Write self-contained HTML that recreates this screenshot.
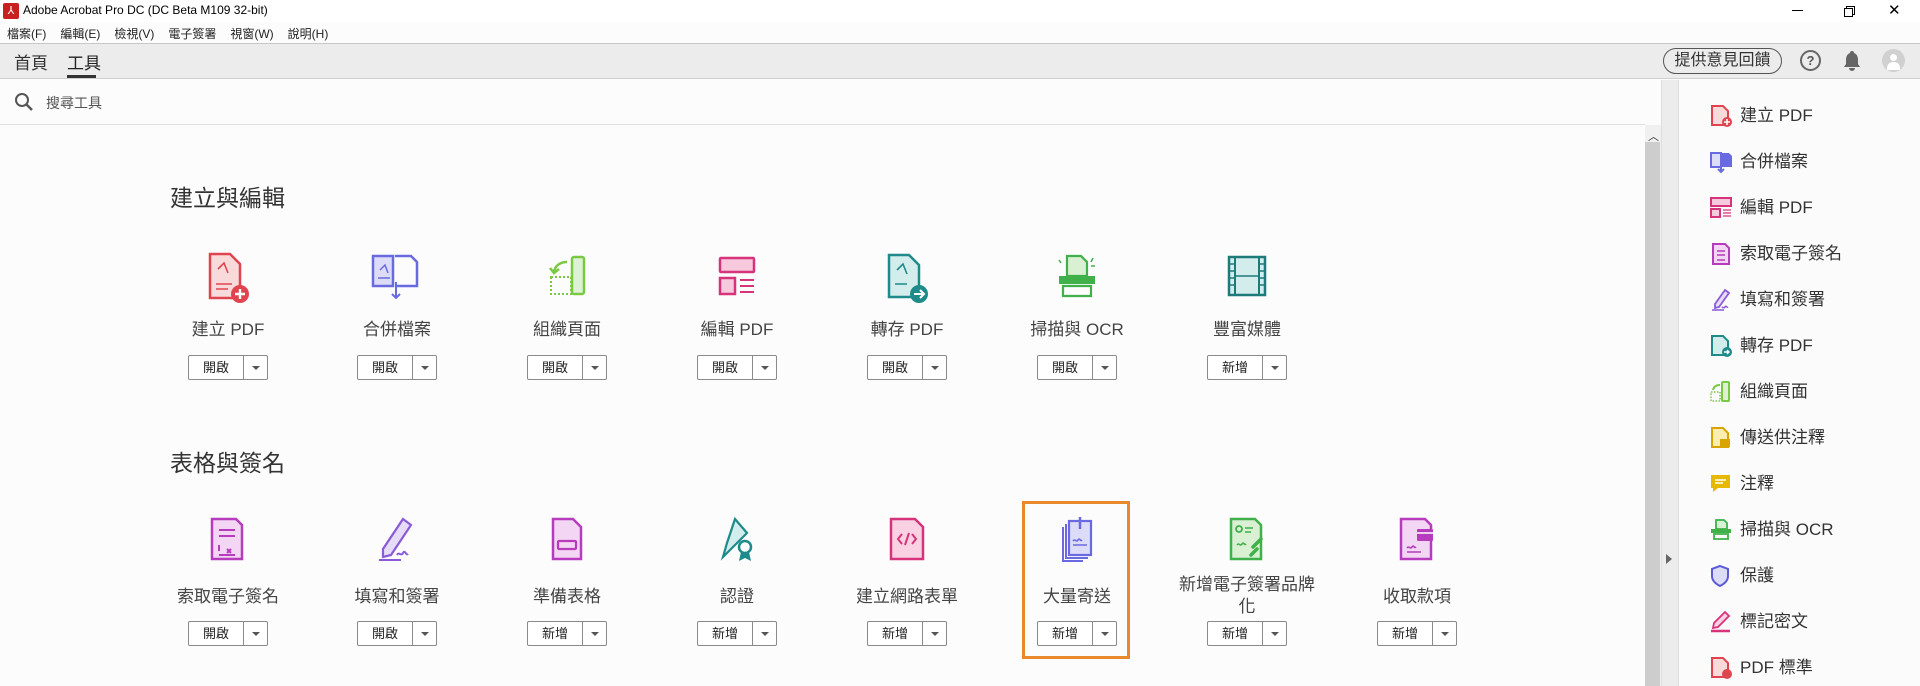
<!DOCTYPE html>
<html><head><meta charset="utf-8"><style>
*{margin:0;padding:0;box-sizing:border-box}
body{width:1920px;height:686px;overflow:hidden;background:#fcfcfc;font-family:"Liberation Sans","Noto Sans CJK TC",sans-serif;color:#333;position:relative}
.a{position:absolute}
.menu span{margin-right:14px}
.cell{position:absolute;width:170px;text-align:center}
.lbl{font-size:17px;color:#444;line-height:22px}
.r1 .lbl{margin-top:8px!important}
.r2 .lbl{margin-top:12px!important}
.btn{position:absolute;width:80px;height:25px;border:1px solid #8a8a8a;border-radius:2px;background:#fff;font-size:13px;color:#222;left:45px}
.btn .l{position:absolute;left:0;top:0;width:55px;height:23px;line-height:23px;text-align:center;border-right:1px solid #8a8a8a}
.btn .r{position:absolute;left:63px;top:10px;width:0;height:0;border-left:4px solid transparent;border-right:4px solid transparent;border-top:4px solid #555}
.sb{position:absolute;left:1708px;font-size:17px;color:#333;height:30px;line-height:30px}
.sb svg{position:absolute;left:0;top:3px}
.sb span{position:absolute;left:32px;white-space:nowrap}
</style></head><body>
<div class="a" style="left:0;top:0;width:1920px;height:22px;background:#fff"></div>
<div class="a" style="left:3px;top:3px;width:16px;height:16px;background:#c8201e;border-radius:2px;color:#fff;font-size:11px;text-align:center;line-height:16px">⅄</div>
<div class="a" style="left:23px;top:3px;font-size:12px;color:#000">Adobe Acrobat Pro DC (DC Beta M109 32-bit)</div>
<div class="a" style="left:1792px;top:10px;width:11px;height:1px;background:#000"></div>
<div class="a" style="left:1846px;top:6px;width:9px;height:9px;border:1px solid #000"></div>
<div class="a" style="left:1844px;top:8px;width:9px;height:9px;border:1px solid #000;background:#fff"></div>
<div class="a" style="left:1888px;top:1px;font-size:15px;color:#000">✕</div>
<div class="a menu" style="left:7px;top:25px;font-size:12px;color:#222"><span>檔案(F)</span><span>編輯(E)</span><span>檢視(V)</span><span>電子簽署</span><span>視窗(W)</span><span>說明(H)</span></div>
<div class="a" style="left:0;top:43px;width:1920px;height:1px;background:#c8c8c8"></div>
<div class="a" style="left:0;top:44px;width:1920px;height:35px;background:#ececec;border-bottom:1px solid #cfcfcf"></div>
<div class="a" style="left:14px;top:49px;font-size:17px;color:#333">首頁</div>
<div class="a" style="left:67px;top:49px;font-size:17px;color:#222">工具</div>
<div class="a" style="left:67px;top:75px;width:29px;height:3px;background:#333"></div>
<div class="a" style="left:1663px;top:48px;width:119px;height:26px;border:1.5px solid #555;border-radius:13px;font-size:16px;text-align:center;line-height:23px;color:#333">提供意見回饋</div>
<div class="a" style="left:1800px;top:50px;width:21px;height:21px;border:2px solid #666;border-radius:50%;font-size:13px;font-weight:bold;text-align:center;line-height:17px;color:#555">?</div>
<svg class="a" style="left:1843px;top:50px" width="18" height="21"><path d="M9 1a2 2 0 0 1 2 2c3 1 4 4 4 7v4l2 3H1l2-3v-4c0-3 1-6 4-7a2 2 0 0 1 2-2zM6 18h6a3 3 0 0 1-6 0z" fill="#666"/></svg>
<div class="a" style="left:1882px;top:49px;width:23px;height:23px;border-radius:50%;background:#d0d0d0;overflow:hidden"><div style="position:absolute;left:8px;top:5px;width:7px;height:7px;border-radius:50%;background:#fff"></div><div style="position:absolute;left:5px;top:13px;width:13px;height:8px;border-radius:6px 6px 0 0;background:#fff"></div></div>
<svg class="a" style="left:14px;top:92px" width="20" height="20"><circle cx="8" cy="8" r="6" stroke="#555" stroke-width="2" fill="none"/><line x1="12.5" y1="12.5" x2="18" y2="18" stroke="#555" stroke-width="2.4"/></svg>
<div class="a" style="left:46px;top:93px;font-size:14px;color:#555">搜尋工具</div>
<div class="a" style="left:0;top:124px;width:1645px;height:1px;background:#e0e0e0"></div>
<div class="a" style="left:1645px;top:125px;width:16px;height:561px;background:#f0f0f0"></div>
<div class="a" style="left:1645px;top:142px;width:15px;height:544px;background:#cdcdcd"></div>
<div class="a" style="left:1648px;top:128px;font-size:11px;color:#333">︿</div>
<div class="a" style="left:1661px;top:80px;width:18px;height:606px;background:#ececec;border-left:1px solid #ddd;border-right:1px solid #ddd"></div>
<div class="a" style="left:1666px;top:554px;width:0;height:0;border-top:5px solid transparent;border-bottom:5px solid transparent;border-left:6px solid #666"></div>
<div class="a" style="left:1679px;top:80px;width:241px;height:606px;background:#fbfbfb"></div>

<div class="a" style="left:170px;top:179px;font-size:23px;color:#333">建立與編輯</div>
<div class="a" style="left:170px;top:444px;font-size:23px;color:#333">表格與簽名</div>

<div class="r1">
<div class="cell" style="left:143px;top:252px">
<svg width="60" height="54" viewBox="0 0 60 54"><path d="M12 2h20l10 10v34H12z" fill="#f8dada" stroke="#e0454f" stroke-width="2.5"/><path d="M20 17l6-6 4 10M18 32h16M18 37h12" stroke="#e0454f" stroke-width="1.6" fill="none"/><circle cx="42" cy="42" r="9" fill="#e0454f"/><path d="M42 37v10M37 42h10" stroke="#fff" stroke-width="2.4"/></svg>
<div class="lbl">建立 PDF</div><div class="btn" style="top:103px"><div class="l">開啟</div><div class="r"></div></div></div>
<div class="cell" style="left:312px;top:252px">
<svg width="60" height="54" viewBox="0 0 60 54"><path d="M6 4h20v30H6z" fill="#dcdcf8" stroke="#6a6ae0" stroke-width="2.5"/><path d="M28 4h16l6 6v24H28" fill="none" stroke="#6a6ae0" stroke-width="2.5"/><path d="M13 18l5-5 3 8M11 26h12" stroke="#6a6ae0" stroke-width="1.5" fill="none"/><path d="M29 30v16M25 42l4 4 4-4" stroke="#6a6ae0" stroke-width="2" fill="none"/></svg>
<div class="lbl">合併檔案</div><div class="btn" style="top:103px"><div class="l">開啟</div><div class="r"></div></div></div>
<div class="cell" style="left:482px;top:252px">
<svg width="60" height="54" viewBox="0 0 60 54"><rect x="35" y="5" width="12" height="37" rx="2" fill="#ddf2d4" stroke="#7ac943" stroke-width="2.5"/><rect x="14" y="25" width="20" height="17" fill="none" stroke="#7ac943" stroke-width="2" stroke-dasharray="2 2"/><path d="M30 10c-6 0-12 3-13 10M13 16l4 5 5-4" stroke="#7ac943" stroke-width="2.5" fill="none"/></svg>
<div class="lbl">組織頁面</div><div class="btn" style="top:103px"><div class="l">開啟</div><div class="r"></div></div></div>
<div class="cell" style="left:652px;top:252px">
<svg width="60" height="54" viewBox="0 0 60 54"><rect x="13" y="6" width="34" height="14" rx="1" fill="#f6c9dd" stroke="#d6337a" stroke-width="2.5"/><rect x="13" y="26" width="15" height="16" fill="#f6c9dd" stroke="#d6337a" stroke-width="2.5"/><path d="M33 28h14M33 34h14M33 40h14" stroke="#d6337a" stroke-width="2"/></svg>
<div class="lbl">編輯 PDF</div><div class="btn" style="top:103px"><div class="l">開啟</div><div class="r"></div></div></div>
<div class="cell" style="left:822px;top:252px">
<svg width="60" height="54" viewBox="0 0 60 54"><path d="M12 3h20l10 10v32H12z" fill="#d3ecec" stroke="#1f8a8a" stroke-width="2.5"/><path d="M20 18l6-6 4 10M18 32h12" stroke="#1f8a8a" stroke-width="1.6" fill="none"/><circle cx="42" cy="42" r="9" fill="#1f8a8a"/><path d="M37 42h9M43 38l4 4-4 4" stroke="#fff" stroke-width="2" fill="none"/></svg>
<div class="lbl">轉存 PDF</div><div class="btn" style="top:103px"><div class="l">開啟</div><div class="r"></div></div></div>
<div class="cell" style="left:992px;top:252px">
<svg width="60" height="54" viewBox="0 0 60 54"><path d="M20 4h14l6 6v14H20z" fill="#d9f0d2" stroke="#3fb04a" stroke-width="2.2"/><rect x="12" y="24" width="36" height="8" fill="#3fb04a"/><path d="M16 34h28v10H16z" fill="none" stroke="#3fb04a" stroke-width="2.2"/><path d="M12 8l2 3M46 6l-2 4M48 14h-4" stroke="#3fb04a" stroke-width="1.5"/></svg>
<div class="lbl">掃描與 OCR</div><div class="btn" style="top:103px"><div class="l">開啟</div><div class="r"></div></div></div>
<div class="cell" style="left:1162px;top:252px">
<svg width="60" height="54" viewBox="0 0 60 54"><rect x="12" y="5" width="36" height="38" fill="#d3ecec" stroke="#1f7a7a" stroke-width="2.5"/><path d="M18 5v38M42 5v38" stroke="#1f7a7a" stroke-width="2"/><path d="M12 12h6M12 19h6M12 26h6M12 33h6M42 12h6M42 19h6M42 26h6M42 33h6M18 24h24" stroke="#1f7a7a" stroke-width="1.5"/></svg>
<div class="lbl">豐富媒體</div><div class="btn" style="top:103px"><div class="l">新增</div><div class="r"></div></div></div>
</div>

<div class="r2">
<div class="cell" style="left:143px;top:515px">
<svg width="60" height="54" viewBox="0 0 60 54"><path d="M14 4h24l6 6v34H14z" fill="#f3d6f3" stroke="#b63bbd" stroke-width="2.5"/><path d="M21 15h16M21 21h16M21 30v6M29 34l4 4M33 34l-4 4M21 40h16" stroke="#b63bbd" stroke-width="2"/></svg>
<div class="lbl">索取電子簽名</div><div class="btn" style="top:106px"><div class="l">開啟</div><div class="r"></div></div></div>
<div class="cell" style="left:312px;top:515px">
<svg width="60" height="54" viewBox="0 0 60 54"><path d="M36 4l8 6-20 30-8 2v-8z" fill="#e7dcf7" stroke="#8a5bd6" stroke-width="2.2"/><path d="M12 45h22M30 40c2-4 4 2 6-2s3 3 5 1" stroke="#8a5bd6" stroke-width="2" fill="none"/></svg>
<div class="lbl">填寫和簽署</div><div class="btn" style="top:106px"><div class="l">開啟</div><div class="r"></div></div></div>
<div class="cell" style="left:482px;top:515px">
<svg width="60" height="54" viewBox="0 0 60 54"><path d="M16 4h20l8 8v32H16z" fill="#f3d6f3" stroke="#b63bbd" stroke-width="2.5"/><rect x="21" y="26" width="18" height="8" rx="1" fill="none" stroke="#b63bbd" stroke-width="2.2"/></svg>
<div class="lbl">準備表格</div><div class="btn" style="top:106px"><div class="l">新增</div><div class="r"></div></div></div>
<div class="cell" style="left:652px;top:515px">
<svg width="60" height="54" viewBox="0 0 60 54"><path d="M28 4l12 14-14 14-10 10 4-14z" fill="#d3ecec" stroke="#1f8a8a" stroke-width="2.2"/><circle cx="38" cy="32" r="6" fill="none" stroke="#1f8a8a" stroke-width="2.5"/><path d="M34 37l-2 9 6-3 6 3-2-9" fill="#1f8a8a"/></svg>
<div class="lbl">認證</div><div class="btn" style="top:106px"><div class="l">新增</div><div class="r"></div></div></div>
<div class="cell" style="left:822px;top:515px">
<svg width="60" height="54" viewBox="0 0 60 54"><path d="M14 4h24l8 8v32H14z" fill="#f9d1e2" stroke="#d6337a" stroke-width="2.5"/><path d="M25 19l-4 5 4 5M35 19l4 5-4 5M32 18l-4 12" stroke="#d6337a" stroke-width="2" fill="none"/></svg>
<div class="lbl">建立網路表單</div><div class="btn" style="top:106px"><div class="l">新增</div><div class="r"></div></div></div>
<div class="cell" style="left:992px;top:515px">
<svg width="60" height="54" viewBox="0 0 60 54"><path d="M16 12v34h20" fill="none" stroke="#6a6ae0" stroke-width="2"/><path d="M19 9v34h22" fill="none" stroke="#6a6ae0" stroke-width="2"/><rect x="22" y="6" width="22" height="34" fill="#dcdcf8" stroke="#6a6ae0" stroke-width="2.2"/><path d="M33 2v12" stroke="#6a6ae0" stroke-width="2.5"/><path d="M26 26c2-3 3 2 5-1s2 2 4 0M26 30h14" stroke="#6a6ae0" stroke-width="1.6" fill="none"/></svg>
<div class="lbl">大量寄送</div><div class="btn" style="top:106px"><div class="l">新增</div><div class="r"></div></div></div>
<div class="cell" style="left:1162px;top:515px">
<svg width="60" height="54" viewBox="0 0 60 54"><path d="M14 4h24l6 6v34H14z" fill="#d9f0d2" stroke="#3fb04a" stroke-width="2.5"/><circle cx="22" cy="14" r="3" fill="none" stroke="#3fb04a" stroke-width="1.8"/><path d="M28 13h8M28 17h6M20 30c2-3 3 2 5-1s2 2 4 0" stroke="#3fb04a" stroke-width="1.6" fill="none"/><path d="M36 32l8-8M34 40l6-6" stroke="#3fb04a" stroke-width="3.5" stroke-linecap="round"/></svg>
<div class="lbl" style="margin-top:0px!important;line-height:22px">新增電子簽署品牌<br>化</div><div class="btn" style="top:106px"><div class="l">新增</div><div class="r"></div></div></div>
<div class="cell" style="left:1332px;top:515px">
<svg width="60" height="54" viewBox="0 0 60 54"><path d="M14 4h24l6 6v34H14z" fill="#f3d6f3" stroke="#b63bbd" stroke-width="2.5"/><rect x="30" y="14" width="16" height="12" rx="1" fill="#b63bbd"/><path d="M30 18h16" stroke="#fff" stroke-width="1.5"/><path d="M20 33c2-3 3 2 5-1s2 2 4 0M20 37h14" stroke="#b63bbd" stroke-width="1.6" fill="none"/></svg>
<div class="lbl">收取款項</div><div class="btn" style="top:106px"><div class="l">新增</div><div class="r"></div></div></div>
</div>

<div class="a" style="left:1022px;top:501px;width:108px;height:158px;border:3px solid #e8892b"></div>

<div class="sb" style="top:101px"><svg width="26" height="24"><path d="M4 2h11l5 5v14H4z" fill="#f8dada" stroke="#e0454f" stroke-width="2"/><circle cx="19" cy="18" r="5" fill="#e0454f"/><path d="M19 15v6M16 18h6" stroke="#fff" stroke-width="1.6"/></svg><span>建立 PDF</span></div>
<div class="sb" style="top:147px"><svg width="26" height="24"><rect x="3" y="3" width="10" height="14" fill="#dcdcf8" stroke="#6a6ae0" stroke-width="2"/><path d="M14 3h7l3 3v11H14z" fill="#6a6ae0"/><path d="M13 15v7M10 19l3 3 3-3" stroke="#6a6ae0" stroke-width="2" fill="none"/></svg><span>合併檔案</span></div>
<div class="sb" style="top:193px"><svg width="26" height="24"><rect x="3" y="2" width="20" height="8" fill="#f6c9dd" stroke="#d6337a" stroke-width="2"/><rect x="3" y="13" width="9" height="8" fill="#f6c9dd" stroke="#d6337a" stroke-width="2"/><path d="M15 14h8M15 17h8M15 20h8" stroke="#d6337a" stroke-width="1.3"/></svg><span>編輯 PDF</span></div>
<div class="sb" style="top:239px"><svg width="26" height="24"><path d="M5 2h12l4 4v16H5z" fill="#f3d6f3" stroke="#b63bbd" stroke-width="2"/><path d="M9 9h8M9 13h8M9 18h8" stroke="#b63bbd" stroke-width="1.5"/></svg><span>索取電子簽名</span></div>
<div class="sb" style="top:285px"><svg width="26" height="24"><path d="M17 2l4 3-10 14-4 1v-4z" fill="#e7dcf7" stroke="#8a5bd6" stroke-width="1.8"/><path d="M4 22h12M14 20c1-2 2 1 3-1s2 1 3 0" stroke="#8a5bd6" stroke-width="1.5" fill="none"/></svg><span>填寫和簽署</span></div>
<div class="sb" style="top:331px"><svg width="26" height="24"><path d="M4 2h11l5 5v14H4z" fill="#d3ecec" stroke="#1f8a8a" stroke-width="2"/><circle cx="19" cy="18" r="5" fill="#1f8a8a"/><path d="M16 18h5M19 16l2 2-2 2" stroke="#fff" stroke-width="1.4" fill="none"/></svg><span>轉存 PDF</span></div>
<div class="sb" style="top:377px"><svg width="26" height="24"><rect x="14" y="2" width="7" height="19" rx="1" fill="#ddf2d4" stroke="#7ac943" stroke-width="2"/><rect x="3" y="12" width="9" height="9" fill="none" stroke="#7ac943" stroke-width="1.5" stroke-dasharray="1.5 1.5"/><path d="M12 5c-3 0-6 1-7 5" stroke="#7ac943" stroke-width="2" fill="none"/></svg><span>組織頁面</span></div>
<div class="sb" style="top:423px"><svg width="26" height="24"><path d="M4 2h11l5 5v14H4z" fill="#fbeeb0" stroke="#d9a400" stroke-width="2"/><rect x="12" y="13" width="10" height="8" fill="#d9a400"/></svg><span>傳送供注釋</span></div>
<div class="sb" style="top:469px"><svg width="26" height="24"><path d="M3 3h19v13H10l-5 4v-4H3z" fill="#e6b800"/><path d="M7 8h11M7 11h8" stroke="#fff" stroke-width="1.4"/></svg><span>注釋</span></div>
<div class="sb" style="top:515px"><svg width="26" height="24"><path d="M8 2h8l3 3v6H8z" fill="#d9f0d2" stroke="#3fb04a" stroke-width="1.8"/><rect x="3" y="11" width="20" height="4" fill="#3fb04a"/><path d="M6 16h14v5H6z" fill="none" stroke="#3fb04a" stroke-width="1.8"/></svg><span>掃描與 OCR</span></div>
<div class="sb" style="top:561px"><svg width="26" height="24"><path d="M12 2l8 3v7c0 5-4 8-8 10-4-2-8-5-8-10V5z" fill="#dcdcf8" stroke="#5a5ad6" stroke-width="2"/></svg><span>保護</span></div>
<div class="sb" style="top:607px"><svg width="26" height="24"><path d="M17 2l4 4-11 11-5 1 1-5z" fill="#f9d1e2" stroke="#d6337a" stroke-width="1.8"/><path d="M3 21h19" stroke="#d6337a" stroke-width="2.5"/></svg><span>標記密文</span></div>
<div class="sb" style="top:653px"><svg width="26" height="24"><path d="M4 2h11l5 5v14H4z" fill="#f8dada" stroke="#e0454f" stroke-width="2"/><circle cx="19" cy="18" r="5" fill="#e0454f"/></svg><span>PDF 標準</span></div>
</body></html>
